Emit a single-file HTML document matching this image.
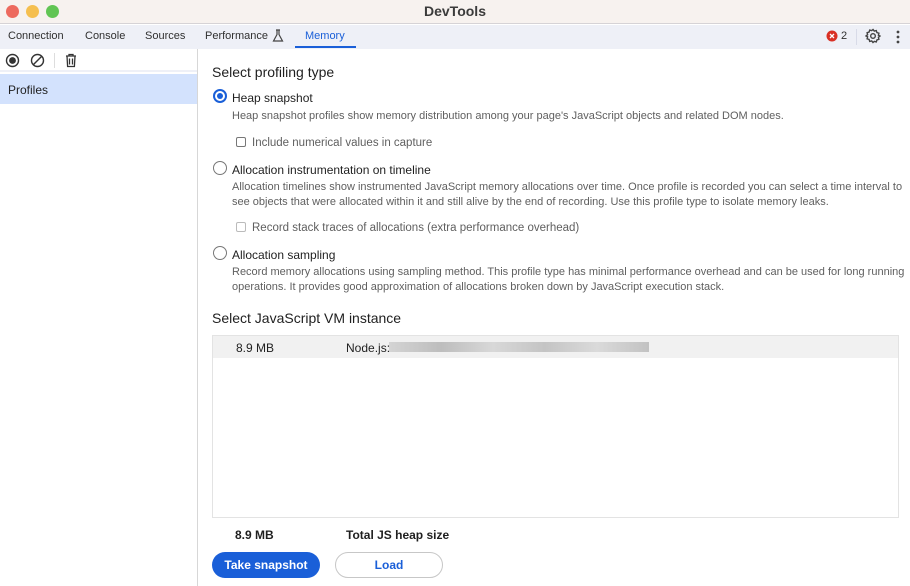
<!DOCTYPE html>
<html><head><meta charset="utf-8"><style>
*{box-sizing:border-box;margin:0;padding:0}
body{width:910px;height:586px;overflow:hidden;font-family:"Liberation Sans",sans-serif;background:#fff;color:#1f1f1f;position:relative;font-size:12px}
.title{position:absolute;left:0;top:0;width:910px;height:24px;background:#f7f2ef;border-bottom:1px solid #d6d3d6}
.title .t{position:absolute;left:0;right:0;top:3px;text-align:center;font-weight:bold;font-size:14px;color:#3b3b3b}
.dot{position:absolute;top:5px;width:13px;height:13px;border-radius:50%}
.tabs{position:absolute;left:0;top:25px;width:910px;height:24px;background:#eef0f7}
.tab{position:absolute;top:5px;font-size:11px;color:#303030}
.side{position:absolute;left:0;top:49px;width:198px;height:537px;border-right:1px solid #d7d7d7}
.tool{height:23px;border-bottom:2px solid #eef0f7}
.prof{position:absolute;top:25px;left:0;width:197px;height:30px;background:#d3e2fd;padding:9px 8px;font-size:12px}
.main{position:absolute;left:212px;top:49px;right:0}
h2{position:absolute;font-weight:normal;font-size:14px;color:#1f1f1f}
.radio{position:absolute;width:14px;height:14px;border-radius:50%;border:1px solid #777}
.lbl{position:absolute;font-size:12px}
.desc{position:absolute;font-size:11px;color:#5f5f5f;line-height:14.5px}
.cb{position:absolute;width:10px;height:10px;border:1px solid #777;border-radius:2px}
.btn{position:absolute;height:26px;border-radius:13px;font-size:12px;text-align:center;line-height:26px;font-weight:bold}
</style></head><body>
<div class="title"><div class="dot" style="left:6px;background:#ed6a5e"></div><div class="dot" style="left:26px;background:#f5bf4f"></div><div class="dot" style="left:46px;background:#61c554"></div><div class="t">DevTools</div></div>
<div class="tabs">
<span class="tab" style="left:8px">Connection</span>
<span class="tab" style="left:85px">Console</span>
<span class="tab" style="left:145px">Sources</span>
<span class="tab" style="left:205px">Performance</span>
<svg style="position:absolute;left:272px;top:4px" width="12" height="13" viewBox="0 0 12 13" fill="none" stroke="#444" stroke-width="1.2"><path d="M4 1h4M5 1v4.5L1.5 12h9L7 5.5V1"/></svg>
<span class="tab" style="left:305px;color:#1a5fd8">Memory</span>
<div style="position:absolute;left:295px;top:21px;width:61px;height:2px;background:#1a5fd8"></div>
<svg style="position:absolute;left:826px;top:5px" width="12" height="12"><circle cx="6" cy="6" r="5.5" fill="#d93025"/><path d="M4 4l4 4M8 4l-4 4" stroke="#fff" stroke-width="1.3"/></svg>
<span class="tab" style="left:841px">2</span>
<div style="position:absolute;left:856px;top:4px;width:1px;height:16px;background:#d8dbe8"></div>
<svg style="position:absolute;left:865px;top:3px" width="16" height="16" viewBox="0 0 16 16" fill="none" stroke="#444" stroke-width="1.4"><circle cx="8" cy="8" r="2.3"/><path d="M8 1.5l1.3 1.6 2-.5.6 2 2 .6-.5 2L15 8l-1.6 1.3.5 2-2 .6-.6 2-2-.5L8 14.5l-1.3-1.6-2 .5-.6-2-2-.6.5-2L1 8l1.6-1.3-.5-2 2-.6.6-2 2 .5z"/></svg>
<svg style="position:absolute;left:895px;top:4px" width="6" height="16"><circle cx="3" cy="3" r="1.4" fill="#444"/><circle cx="3" cy="8" r="1.4" fill="#444"/><circle cx="3" cy="13" r="1.4" fill="#444"/></svg>
</div>
<div class="side"><div class="tool">
<svg style="position:absolute;left:5px;top:4px" width="15" height="15"><circle cx="7.5" cy="7.5" r="6" fill="none" stroke="#333" stroke-width="1.4"/><circle cx="7.5" cy="7.5" r="3.4" fill="#333"/></svg>
<svg style="position:absolute;left:30px;top:4px" width="15" height="15"><circle cx="7.5" cy="7.5" r="6" fill="none" stroke="#333" stroke-width="1.4"/><path d="M3.5 11.5l8-8" stroke="#333" stroke-width="1.4"/></svg>
<div style="position:absolute;left:54px;top:4px;width:1px;height:15px;background:#ddd"></div>
<svg style="position:absolute;left:64px;top:4px" width="14" height="15" fill="none" stroke="#333" stroke-width="1.3"><path d="M2 3h10M5 3V1.5h4V3M3 3l.6 10.5h6.8L11 3M5.5 5.5v6M8.5 5.5v6"/></svg>
</div><div class="prof">Profiles</div></div>
<div class="main">
<h2 style="top:15px">Select profiling type</h2>
<div class="radio" style="left:1px;top:40px;border:2px solid #1a5fd8"><div style="margin:2px;width:6px;height:6px;border-radius:50%;background:#1a5fd8"></div></div>
<div class="lbl" style="left:20px;top:42px">Heap snapshot</div>
<div class="desc" style="left:20px;top:60px">Heap snapshot profiles show memory distribution among your page's JavaScript objects and related DOM nodes.</div>
<div class="cb" style="left:24px;top:88px"></div>
<div class="desc" style="left:40px;top:87px;font-size:11.5px">Include numerical values in capture</div>
<div class="radio" style="left:1px;top:112px"></div>
<div class="lbl" style="left:20px;top:114px">Allocation instrumentation on timeline</div>
<div class="desc" style="left:20px;top:131px;width:680px">Allocation timelines show instrumented JavaScript memory allocations over time. Once profile is recorded you can select a time interval to see objects that were allocated within it and still alive by the end of recording. Use this profile type to isolate memory leaks.</div>
<div class="cb" style="left:24px;top:173px;border-color:#bbb"></div>
<div class="desc" style="left:40px;top:172px;font-size:11.5px">Record stack traces of allocations (extra performance overhead)</div>
<div class="radio" style="left:1px;top:197px"></div>
<div class="lbl" style="left:20px;top:199px">Allocation sampling</div>
<div class="desc" style="left:20px;top:216px;width:680px">Record memory allocations using sampling method. This profile type has minimal performance overhead and can be used for long running operations. It provides good approximation of allocations broken down by JavaScript execution stack.</div>
<h2 style="top:261px">Select JavaScript VM instance</h2>
<div style="position:absolute;left:0;top:286px;width:687px;height:183px;border:1px solid #e3e3e3">
<div style="height:22px;background:#f1f1f1;position:relative"><span style="position:absolute;left:23px;top:5px">8.9 MB</span><span style="position:absolute;left:133px;top:5px">Node.js:</span><div style="position:absolute;left:176px;top:6px;width:260px;height:10px;background:linear-gradient(90deg,#d4d4d4,#bdbdbd,#d8d8d8,#c4c4c4,#dadada,#c2c2c2)"></div></div></div>
<div class="lbl" style="left:23px;top:479px;font-weight:bold">8.9 MB</div>
<div class="lbl" style="left:134px;top:479px;font-weight:bold">Total JS heap size</div>
<div class="btn" style="left:0;top:503px;width:108px;background:#1a5fd8;color:#fff">Take snapshot</div>
<div class="btn" style="left:123px;top:503px;width:108px;border:1px solid #c7c7c7;color:#1a5fd8;line-height:24px">Load</div>
</div>
</body></html>
